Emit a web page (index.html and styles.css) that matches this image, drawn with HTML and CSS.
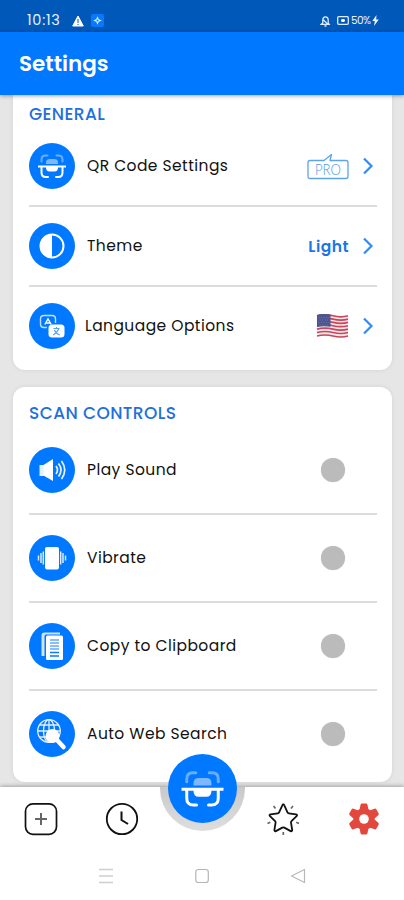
FILE: index.html
```html
<!DOCTYPE html>
<html lang="en">
<head>
<meta charset="utf-8">
<title>Settings</title>
<link rel="stylesheet" href="styles.css">
</head>
<body>
<svg class="defs" width="0" height="0" aria-hidden="true">
  <symbol id="scan" viewBox="0 0 46 46">
    <g fill="none" stroke-width="2" stroke-linecap="round">
      <path stroke="#68adff" d="M12.500 18.500v-2q0-4 4-4h2M33.500 18.500v-2q0-4-4-4h-2"/>
      <path stroke="#fff" d="M12.500 24.500v5q0 4.500 4.500 4.500h2M33.500 24.500v5q0 4.500-4.500 4.500h-2"/>
    </g>
    <path fill="#7db8ff" d="M17 21v-1.500q0-3.500 3.500-3.500h5q3.500 0 3.500 3.500V21z"/>
    <path fill="#fff" d="M9 22.500h28v2h-8q0 4-3.500 4h-5q-3.500 0-3.500-4H9z"/>
  </symbol>
  <symbol id="chevron" viewBox="0 0 12 18"><path d="M2 1.500l7.500 7.500L2 16.500" fill="none" stroke="#2f8ff5" stroke-width="2.200"/></symbol>
</svg>
<div class="phone">
  <div class="status">
    <span class="time">10:13</span>
    <svg class="warn" width="12" height="12" viewBox="0 0 12 12"><path fill="#fff" stroke="#fff" stroke-linejoin="round" d="M6 1l5.300 10H.7z"/><path stroke="#0058b8" d="M6 4v4M6 9v1"/></svg>
    <svg class="spark" width="13" height="13" viewBox="0 0 13 13"><rect width="13" height="13" rx="2" fill="#0878ff"/><path fill="#c8f3ff" d="M6.500 2.200l1.300 3 3 1.300-3 1.300-1.300 3-1.300-3-3-1.300 3-1.300z"/><circle cx="6.500" cy="6.500" r="1" fill="#0878ff"/></svg>
    <span class="spacer"></span>
    <svg width="11" height="12" viewBox="0 0 11 12"><path fill="none" stroke="#dcecff" stroke-width="1.300" d="M2.800 8V5q0-3.200 2.700-3.200T8.200 5v3l1 1.300H1.300zM4.500 11h2M2.500 4l5 5"/></svg>
    <svg class="batt" width="12" height="9" viewBox="0 0 12 9"><rect x=".7" y=".7" width="10.600" height="7.600" rx="1" fill="none" stroke="#dcecff" stroke-width="1.300"/><path stroke="#fff" stroke-width="1.800" d="M4 4.500h4M6 3v3"/></svg>
    <span class="pct">50%</span>
    <svg width="7" height="11" viewBox="0 0 7 11"><path fill="#e6f3ff" d="M4.500 0L.3 6h2.500L2 11l4.800-6.500H4.200z"/></svg>
  </div>
  <header class="bar"><h1>Settings</h1></header>
  <main class="content">
    <section class="card general">
      <h2>GENERAL</h2>
      <div class="row">
        <span class="disc"><svg width="46" height="46"><use href="#scan"/></svg></span>
        <span class="label">QR Code Settings</span>
        <svg class="pro" width="42" height="27" viewBox="0 0 42 27"><path fill="none" stroke="#5ea3e8" stroke-width="1.300" stroke-linejoin="round" d="M3 7.500h14l7.500-6-1.500 6h16q2 0 2 2v14q0 2-2 2H3q-2 0-2-2v-14q0-2 2-2z"/><text x="8" y="21.500" textLength="26" lengthAdjust="spacingAndGlyphs">PRO</text></svg>
        <svg class="chev" width="12" height="18"><use href="#chevron"/></svg>
      </div>
      <div class="row">
        <span class="disc"><svg width="46" height="46" viewBox="0 0 46 46"><circle cx="23" cy="23" r="11.500" fill="none" stroke="#fff" stroke-width="2"/><path fill="#fff" d="M23 11a12 12 0 0 0 0 24z"/></svg></span>
        <span class="label">Theme</span>
        <span class="value">Light</span>
        <svg class="chev" width="12" height="18"><use href="#chevron"/></svg>
      </div>
      <div class="row">
        <span class="disc"><svg width="46" height="46" viewBox="0 0 46 46"><path fill="none" stroke="#c5deff" stroke-width="1.400" d="M18 24.500h-3q-3.500 0-3.500-3.500v-5q0-3.500 3.500-3.500h8q3.500 0 3.500 3.500v4"/><path fill="none" stroke="#fff" stroke-width="1.400" d="M15.800 21.500l3.200-5.500 3.200 5.500M17 20h4"/><rect x="19.500" y="21.500" width="16" height="13" rx="3.500" fill="#fff"/><path fill="none" stroke="#4f9ffb" stroke-width="1.100" d="M24.500 25.500h6M27.500 24v1.500M29.700 26q-1.500 4-5.500 6M25.300 27q2 4 5.500 5"/></svg></span>
        <span class="label l-lang">Language Options</span>
        <svg class="flag" width="33" height="25" viewBox="0 0 33 25">
          <path fill="#f3e9eb" d="M1 1.500q8-2 16 0t15 0v21q-7 2-15 0t-16 0z"/>
          <g fill="none" stroke="#c9475c" stroke-width="1.700"><path d="M1 1.800q8-2 16 0t15 0M1 5.100q8-2 16 0t15 0M1 8.400q8-2 16 0t15 0M1 11.700q8-2 16 0t15 0M1 15.100q8-2 16 0t15 0M1 18.500q8-2 16 0t15 0M1 22q8-2 16 0t15 0"/></g>
          <path fill="#4d5590" d="M1 1q7-2 13.500-.2v12Q8 11.500 1 13z"/>
          <path stroke="#6d75a6" stroke-width="1" stroke-dasharray="1 1.500" d="M2.500 3.500h11M3.500 6h10M2.500 8.500h11M3.500 11h9"/>
        </svg>
        <svg class="chev" width="12" height="18"><use href="#chevron"/></svg>
      </div>
    </section>
    <section class="card scan">
      <h2>SCAN CONTROLS</h2>
      <div class="row">
        <span class="disc"><svg width="46" height="46" viewBox="0 0 46 46"><path fill="#e2efff" d="M10.500 18h5v11h-5z"/><path fill="#fff" d="M14.500 18l9.500-6v22l-9.500-5.500z"/><g fill="none" stroke="#e8f2ff" stroke-width="1.700"><path d="M27 19q3 4 0 8M29.500 16.500q5 6.500 0 13M32.500 14q6.500 9 0 18"/></g></svg></span>
        <span class="label">Play Sound</span><span class="knob"></span>
      </div>
      <div class="row">
        <span class="disc"><svg width="46" height="46" viewBox="0 0 46 46"><rect x="16" y="12" width="14" height="22.500" rx="2" fill="#fff"/><path stroke="#d9eaff" stroke-width="1.500" d="M9.500 20.500v5M12 18v10M14.300 16.500v13M31.700 16.500v13M34 18v10M36.500 20.500v5"/></svg></span>
        <span class="label">Vibrate</span><span class="knob"></span>
      </div>
      <div class="row">
        <span class="disc"><svg width="46" height="46" viewBox="0 0 46 46"><path fill="#cde3ff" d="M12.500 33V12.500q0-3 3-3H31v2H17q-1.500 0-1.500 1.500v20z"/><rect x="17" y="12.500" width="17" height="24.500" rx="1.500" fill="#fff"/><path stroke="#64a8fa" stroke-width="1.300" d="M21 17h9M21 20h9M21 23h9M21 26h9"/><path stroke="#0878ff" stroke-width="1.500" d="M21 29.500h9M21 33h9"/></svg></span>
        <span class="label">Copy to Clipboard</span><span class="knob"></span>
      </div>
      <div class="row">
        <span class="disc"><svg width="46" height="46" viewBox="0 0 46 46"><g fill="none" stroke="#e4f0ff" stroke-width="1.300"><circle cx="20" cy="20" r="11.300"/><ellipse cx="20" cy="20" rx="5.500" ry="11.300"/><path d="M20 8.700v22.600M8.700 20h22.600M10.500 14h19M10.500 26h12"/></g><circle cx="23.500" cy="25" r="7" fill="#fff"/><path stroke="#fff" stroke-width="4.500" stroke-linecap="round" d="M28 29l6.500 7"/></svg></span>
        <span class="label">Auto Web Search</span><span class="knob"></span>
      </div>
    </section>
  </main>
  <div class="dock">
    <nav class="tabs">
      <svg width="34" height="34" viewBox="0 0 34 34"><rect x="1.500" y="1.800" width="31" height="30.500" rx="7.500" fill="none" stroke="#111" stroke-width="1.700"/><path stroke="#666" stroke-width="2" d="M17 11v12M11 17h12"/></svg>
      <svg width="34" height="34" viewBox="0 0 34 34"><circle cx="17" cy="17" r="15.200" fill="none" stroke="#111" stroke-width="1.800"/><path fill="none" stroke="#111" stroke-width="2" d="M16.500 9.500v8.500l6.500 4"/></svg>
      <span class="gap"></span>
      <svg width="34" height="34" viewBox="0 0 34 34"><path fill="none" stroke="#111" stroke-width="1.800" stroke-linejoin="round" d="M17.300 2.500q.7 0 1 .8l3.200 7q.4.900 1.300 1l7.200 1q1.800.5.600 1.900l-5.100 4.900q-.7.700-.5 1.600l1.200 7.300q0 1.700-1.500 1.100l-6.400-3.500q-1-.5-2 0l-6.400 3.500q-1.500.6-1.500-1.100l1.200-7.300q.2-.9-.5-1.600L4 14.200q-1.200-1.400.6-1.900l7.200-1q.9-.1 1.300-1l3.200-7q.3-.8 1-.8z"/><path stroke="#666" stroke-width="1.700" d="M7.500 4l2 2.500M27 4l-2 2.500M1.500 21.500l2.800-1.200M33 21.500l-2.800-1.200M17.300 30v3"/></svg>
      <svg width="34" height="34" viewBox="0 0 34 34"><path fill="#e2483d" stroke="#e2483d" stroke-width="3" stroke-linejoin="round" d="M15 3h4l1 5 3 1.800 5-1.700 2.300 4-4 3.400v3l4 3.400-2.300 4-5-1.700-3 1.800-1 5h-4l-1-5-3-1.800-5 1.700-2.300-4 4-3.400v-3l-4-3.400 2.300-4 5 1.700L14 8z"/><circle cx="17" cy="17" r="4.800" fill="#fff"/></svg>
    </nav>
    <div class="sysnav">
      <svg width="16" height="16" viewBox="0 0 16 16"><path stroke="#cfcfcf" stroke-width="1.300" d="M1 1.500h14M1 8h14M1 14.500h14"/></svg>
      <svg width="16" height="16" viewBox="0 0 16 16"><rect x="1.800" y="1.500" width="12.500" height="13" rx="2.500" fill="none" stroke="#b5b5b5" stroke-width="1.200"/></svg>
      <svg width="16" height="16" viewBox="0 0 16 16"><path fill="none" stroke="#b8b8b8" stroke-width="1.200" stroke-linejoin="round" d="M14.500 1.500v13L1.500 8z"/></svg>
    </div>
    <div class="notch"></div>
    <div class="fab"><svg width="69" height="69"><use href="#scan"/></svg></div>
  </div>
</div>
</body>
</html>
```
FILE: styles.css
```css
* { box-sizing: border-box; }
body { margin: 0; font-family: Poppins, Inter, "Open Sans", sans-serif; color: #111; }
svg { display: block; flex: none; }
.defs { position: absolute; }
.phone { width: 404px; height: 900px; display: flex; flex-direction: column; overflow: hidden; background: #e6e6e6; }
.status { height: 32px; flex: none; background: #0058b8; display: flex; align-items: center; padding: 9px 25px 0 27px; color: #e8f2ff; }
.time { font-size: 14.500px; letter-spacing: .7px; width: 45px; }
.spark { margin-left: 7px; }
.spacer { flex: 1; }
.batt { margin: 0 2px 0 6px; }
.pct { font-size: 10.500px; width: 20px; margin-right: 1px; letter-spacing: -.6px; }
.bar { height: 63px; flex: none; background: #0078ff; box-shadow: 0 1px 4px rgba(0,0,0,.35); z-index: 1; display: flex; align-items: center; padding-left: 19px; }
h1 { margin: 0; font-size: 21.500px; line-height: 32px; font-weight: 600; color: #fff; }
.content { height: 692px; flex: none; overflow: hidden; padding: 0 12px 0 13px; }
.card { background: #fff; border-radius: 12px; padding: 0 15px 0 16px; box-shadow: 0 0 5px rgba(0,0,0,.08); }
.general { height: 275px; border-radius: 0 0 12px 12px; padding-top: 7px; }
.scan { height: 395px; margin-top: 17px; padding-top: 14px; }
h2 { margin: 0; font-size: 17px; line-height: 24px; font-weight: 500; letter-spacing: .4px; color: #1e70dc; white-space: nowrap; }
.row { display: flex; align-items: center; border-bottom: 2px solid #dcdcdc; }
.row:last-child { border-bottom-color: transparent; }
.general .row { height: 80px; }
.general h2 + .row { height: 81px; padding-top: 1px; }
.scan .row { height: 88px; }
.scan h2 + .row { height: 90px; padding-top: 2px; }
.disc { width: 46px; height: 46px; border-radius: 50%; background: #0078ff; flex: none; }
.label { font-size: 15.500px; line-height: 24px; letter-spacing: .45px; margin-left: 12px; flex: 1; white-space: nowrap; }
.l-lang { margin-left: 10px; }
.value { font-size: 15.500px; font-weight: 600; letter-spacing: .5px; color: #1976e8; }
.pro text { font-family: Lato, sans-serif; font-weight: 300; font-size: 16px; fill: #4f97e0; }
.chev { margin: 0 3px 0 13px; }
.knob { width: 24px; height: 24px; border-radius: 50%; background: #bbb; margin-right: 32px; box-shadow: 0 0 1px #ccc; }
.dock { height: 113px; flex: none; background: #fff; position: relative; box-shadow: 0 -1px 4px rgba(0,0,0,.3); }
.tabs { display: flex; justify-content: space-between; padding: 15px 23px 0 24px; height: 65px; }
.gap { width: 34px; }
.sysnav { display: flex; justify-content: space-between; padding: 16px 98px 0 98px; }
.notch { position: absolute; left: 160px; top: 0; width: 85px; height: 44px; border-radius: 0 0 43px 43px; background: linear-gradient(#c9c9c9, #dedede); }
.fab { position: absolute; left: 168px; top: -33px; width: 69px; height: 69px; border-radius: 50%; background: #0078ff; }
```
